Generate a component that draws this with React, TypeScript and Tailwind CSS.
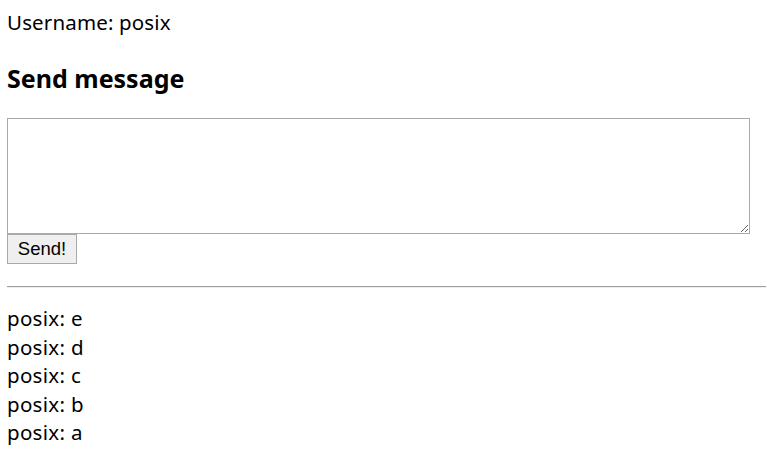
import React from 'react';

const messages = ['e', 'd', 'c', 'b', 'a'];

export default function App() {
  return (
    <div className="min-h-screen bg-white pl-[7px] text-black" style={{ fontFamily: '"Noto Sans", "Open Sans", sans-serif' }}>
      <div className="pt-[8px] text-[20.5px] leading-[28px] tracking-[0.15px]">Username: posix</div>
      <h3 className="mt-[26px] text-[25px] font-bold leading-[32px]">Send message</h3>
      <div className="mt-[24px] flex flex-col items-start">
        <textarea className="h-[116px] w-[743px] resize border border-[#a9a9a9] bg-white outline-none" />
        <button className="h-[30px] w-[70px] border border-[#a9a9a9] bg-[#efefef] text-[18.5px] text-black" style={{ fontFamily: '"Liberation Sans", Arial, sans-serif' }}>
          Send!
        </button>
      </div>
      <hr className="mt-[22px] border-t border-b border-t-[#a0a0a0] border-b-[#eeeeee]" />
      <div className="mt-[16px] text-[20.5px] leading-[28.6px] tracking-[0.3px]">
        {messages.map((m) => (
          <div key={m}>posix: {m}</div>
        ))}
      </div>
    </div>
  );
}
